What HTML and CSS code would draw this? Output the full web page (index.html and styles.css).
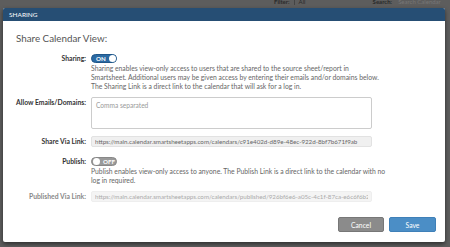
FILE: index.html
```html
<!DOCTYPE html>
<html lang="en">
<head>
    <meta charset="UTF-8">
    <meta name="viewport" content="width=device-width, initial-scale=1.0">
    <title>Sharing</title>
    <link rel="stylesheet" href="styles.css">
</head>
<body>
    <!-- page behind the dialog, only its bottom edge shows -->
    <div class="backdrop-bar">
        <div class="backdrop-row">
            <span class="bd-label">Filter:</span>
            <span class="bd-select">All</span>
            <span class="bd-label bd-search">Search:</span>
            <span class="bd-input">Search Calendar</span>
        </div>
    </div>

    <div class="modal">
        <div class="modal-header">SHARING</div>

        <div class="modal-body">
            <h2>Share Calendar View:</h2>

            <div class="form-row row-toggle">
                <label class="row-label">Sharing:</label>
                <div class="row-control">
                    <span class="toggle toggle-on">ON<span class="knob"></span></span>
                    <p class="help">
                        Sharing enables view-only access to users that are shared to the source sheet/report in<br>
                        Smartsheet. Additional users may be given access by entering their emails and/or domains below.<br>
                        The Sharing Link is a direct link to the calendar that will ask for a log in.
                    </p>
                </div>
            </div>

            <div class="form-row row-emails">
                <label class="row-label" for="emails">Allow Emails/Domains:</label>
                <div class="row-control">
                    <textarea id="emails" placeholder="Comma separated"></textarea>
                </div>
            </div>

            <div class="form-row row-link">
                <label class="row-label">Share Via Link:</label>
                <div class="row-control">
                    <input type="text" class="link-box" readonly value="https://main.calendar.smartsheetapps.com/calendars/c91e402d-d89e-48ec-922d-8bf7b671f9ab">
                </div>
            </div>

            <div class="form-row row-publish">
                <label class="row-label">Publish:</label>
                <div class="row-control">
                    <span class="toggle toggle-off"><span class="knob"></span>OFF</span>
                    <p class="help">
                        Publish enables view-only access to anyone. The Publish Link is a direct link to the calendar with no<br>
                        log in required.
                    </p>
                </div>
            </div>

            <div class="form-row row-published">
                <label class="row-label disabled">Published Via Link:</label>
                <div class="row-control">
                    <input type="text" class="link-box disabled" readonly value="https://main.calendar.smartsheetapps.com/calendars/published/926bf6e6-a05c-4c1f-87ca-e6c6f6b2d9aa">
                </div>
            </div>
        </div>

        <div class="modal-footer">
            <button class="btn btn-cancel">Cancel</button>
            <button class="btn btn-save">Save</button>
        </div>
    </div>
</body>
</html>
```

FILE: styles.css
```css
body {
    margin: 0;
    width: 450px;
    height: 247px;
    overflow: hidden;
    background-color: #5d5d5d;
    font-family: Lato, "Open Sans", Arial, sans-serif;
}
.backdrop-bar {
    height: 8px;
    overflow: hidden;
}
.backdrop-row {
    display: flex;
    align-items: center;
    margin-top: -3px;
    padding-left: 274px;
    font-size: 6px;
    color: #2a2a2a;
    height: 9px;
}
.bd-label {
    font-weight: bold;
}
.bd-select {
    margin-left: 4px;
    padding-left: 4px;
    width: 50px;
    border-left: 1px solid #444;
}
.bd-search {
    margin-left: 24px;
}
.bd-input {
    margin-left: 6px;
    color: #777;
}
.modal {
    margin-left: 3px;
    width: 442px;
    height: 234px;
    background-color: white;
    border-radius: 2px;
    box-shadow: 0 2px 4px rgba(0,0,0,0.5);
    display: flex;
    flex-direction: column;
    color: #333;
}
.modal-header {
    height: 13px;
    line-height: 13px;
    padding-left: 6px;
    background-color: #264e74;
    color: white;
    font-size: 6.5px;
    border-radius: 2px 2px 0 0;
}
.modal-body {
    padding: 11px 0 0 13px;
    flex: 1;
}
h2 {
    margin: 0 0 10px 0;
    font-size: 9.8px;
    font-weight: normal;
    color: #555;
    line-height: 12px;
}
.form-row {
    display: grid;
    grid-template-columns: 70px 281px;
    column-gap: 5px;
}
.row-label {
    text-align: right;
    font-weight: bold;
    font-size: 6.8px;
    color: #333;
    line-height: 9px;
    white-space: nowrap;
}
.row-label.disabled {
    color: #888;
}
.row-control {
    display: flex;
    flex-direction: column;
    align-items: flex-start;
}
.help {
    margin: 1px 0 0 0;
    font-size: 6.8px;
    line-height: 9px;
    color: #666;
    white-space: nowrap;
}
.toggle {
    position: relative;
    display: inline-flex;
    align-items: center;
    box-sizing: border-box;
    width: 26px;
    height: 9px;
    border-radius: 5px;
    font-size: 6.2px;
    font-weight: bold;
    color: white;
}
.toggle-on {
    background-color: #2b6aa3;
    border: 1px solid #1f5689;
    padding-left: 4px;
}
.toggle-off {
    background-color: #9a9a9a;
    border: 1px solid #888;
    padding-left: 1px;
}
.knob {
    display: inline-block;
    width: 7px;
    height: 7px;
    border-radius: 50%;
    background-color: white;
}
.toggle-on .knob {
    margin-left: auto;
}
.toggle-off .knob {
    margin-right: 3px;
}
.row-emails {
    margin-top: 6px;
}
.row-emails .row-label {
    margin-top: 1px;
}
textarea {
    box-sizing: border-box;
    width: 281px;
    height: 32px;
    border: 1px solid #ccc;
    border-radius: 2px;
    padding: 3px 4px;
    font-family: inherit;
    font-size: 6.6px;
    resize: none;
    margin: 0;
}
textarea::placeholder {
    color: #999;
}
.row-link {
    margin-top: 7px;
    align-items: center;
}
.link-box {
    box-sizing: border-box;
    width: 281px;
    height: 11px;
    padding: 0 3px;
    border: 1px solid #e2e2e2;
    border-radius: 2px;
    background-color: #f0f0f0;
    font-family: inherit;
    font-size: 6.2px;
    color: #666;
    margin: 0;
}
.link-box.disabled {
    color: #aaa;
    background-color: #f4f4f4;
    border-color: #eee;
}
.row-publish {
    margin-top: 10px;
}
.row-published {
    margin-top: 6px;
    align-items: center;
}
.modal-footer {
    display: flex;
    justify-content: flex-end;
    gap: 5px;
    padding: 0 9px 10px 0;
}
.btn {
    box-sizing: border-box;
    height: 15px;
    border-radius: 2px;
    font-family: inherit;
    font-size: 6.8px;
    color: white;
    cursor: pointer;
    padding: 0;
}
.btn-cancel {
    width: 46px;
    background-color: #8b8b8b;
    border: 1px solid #777;
}
.btn-save {
    width: 47px;
    background-color: #4b8ec6;
    border: 1px solid #3f80b8;
}
```
